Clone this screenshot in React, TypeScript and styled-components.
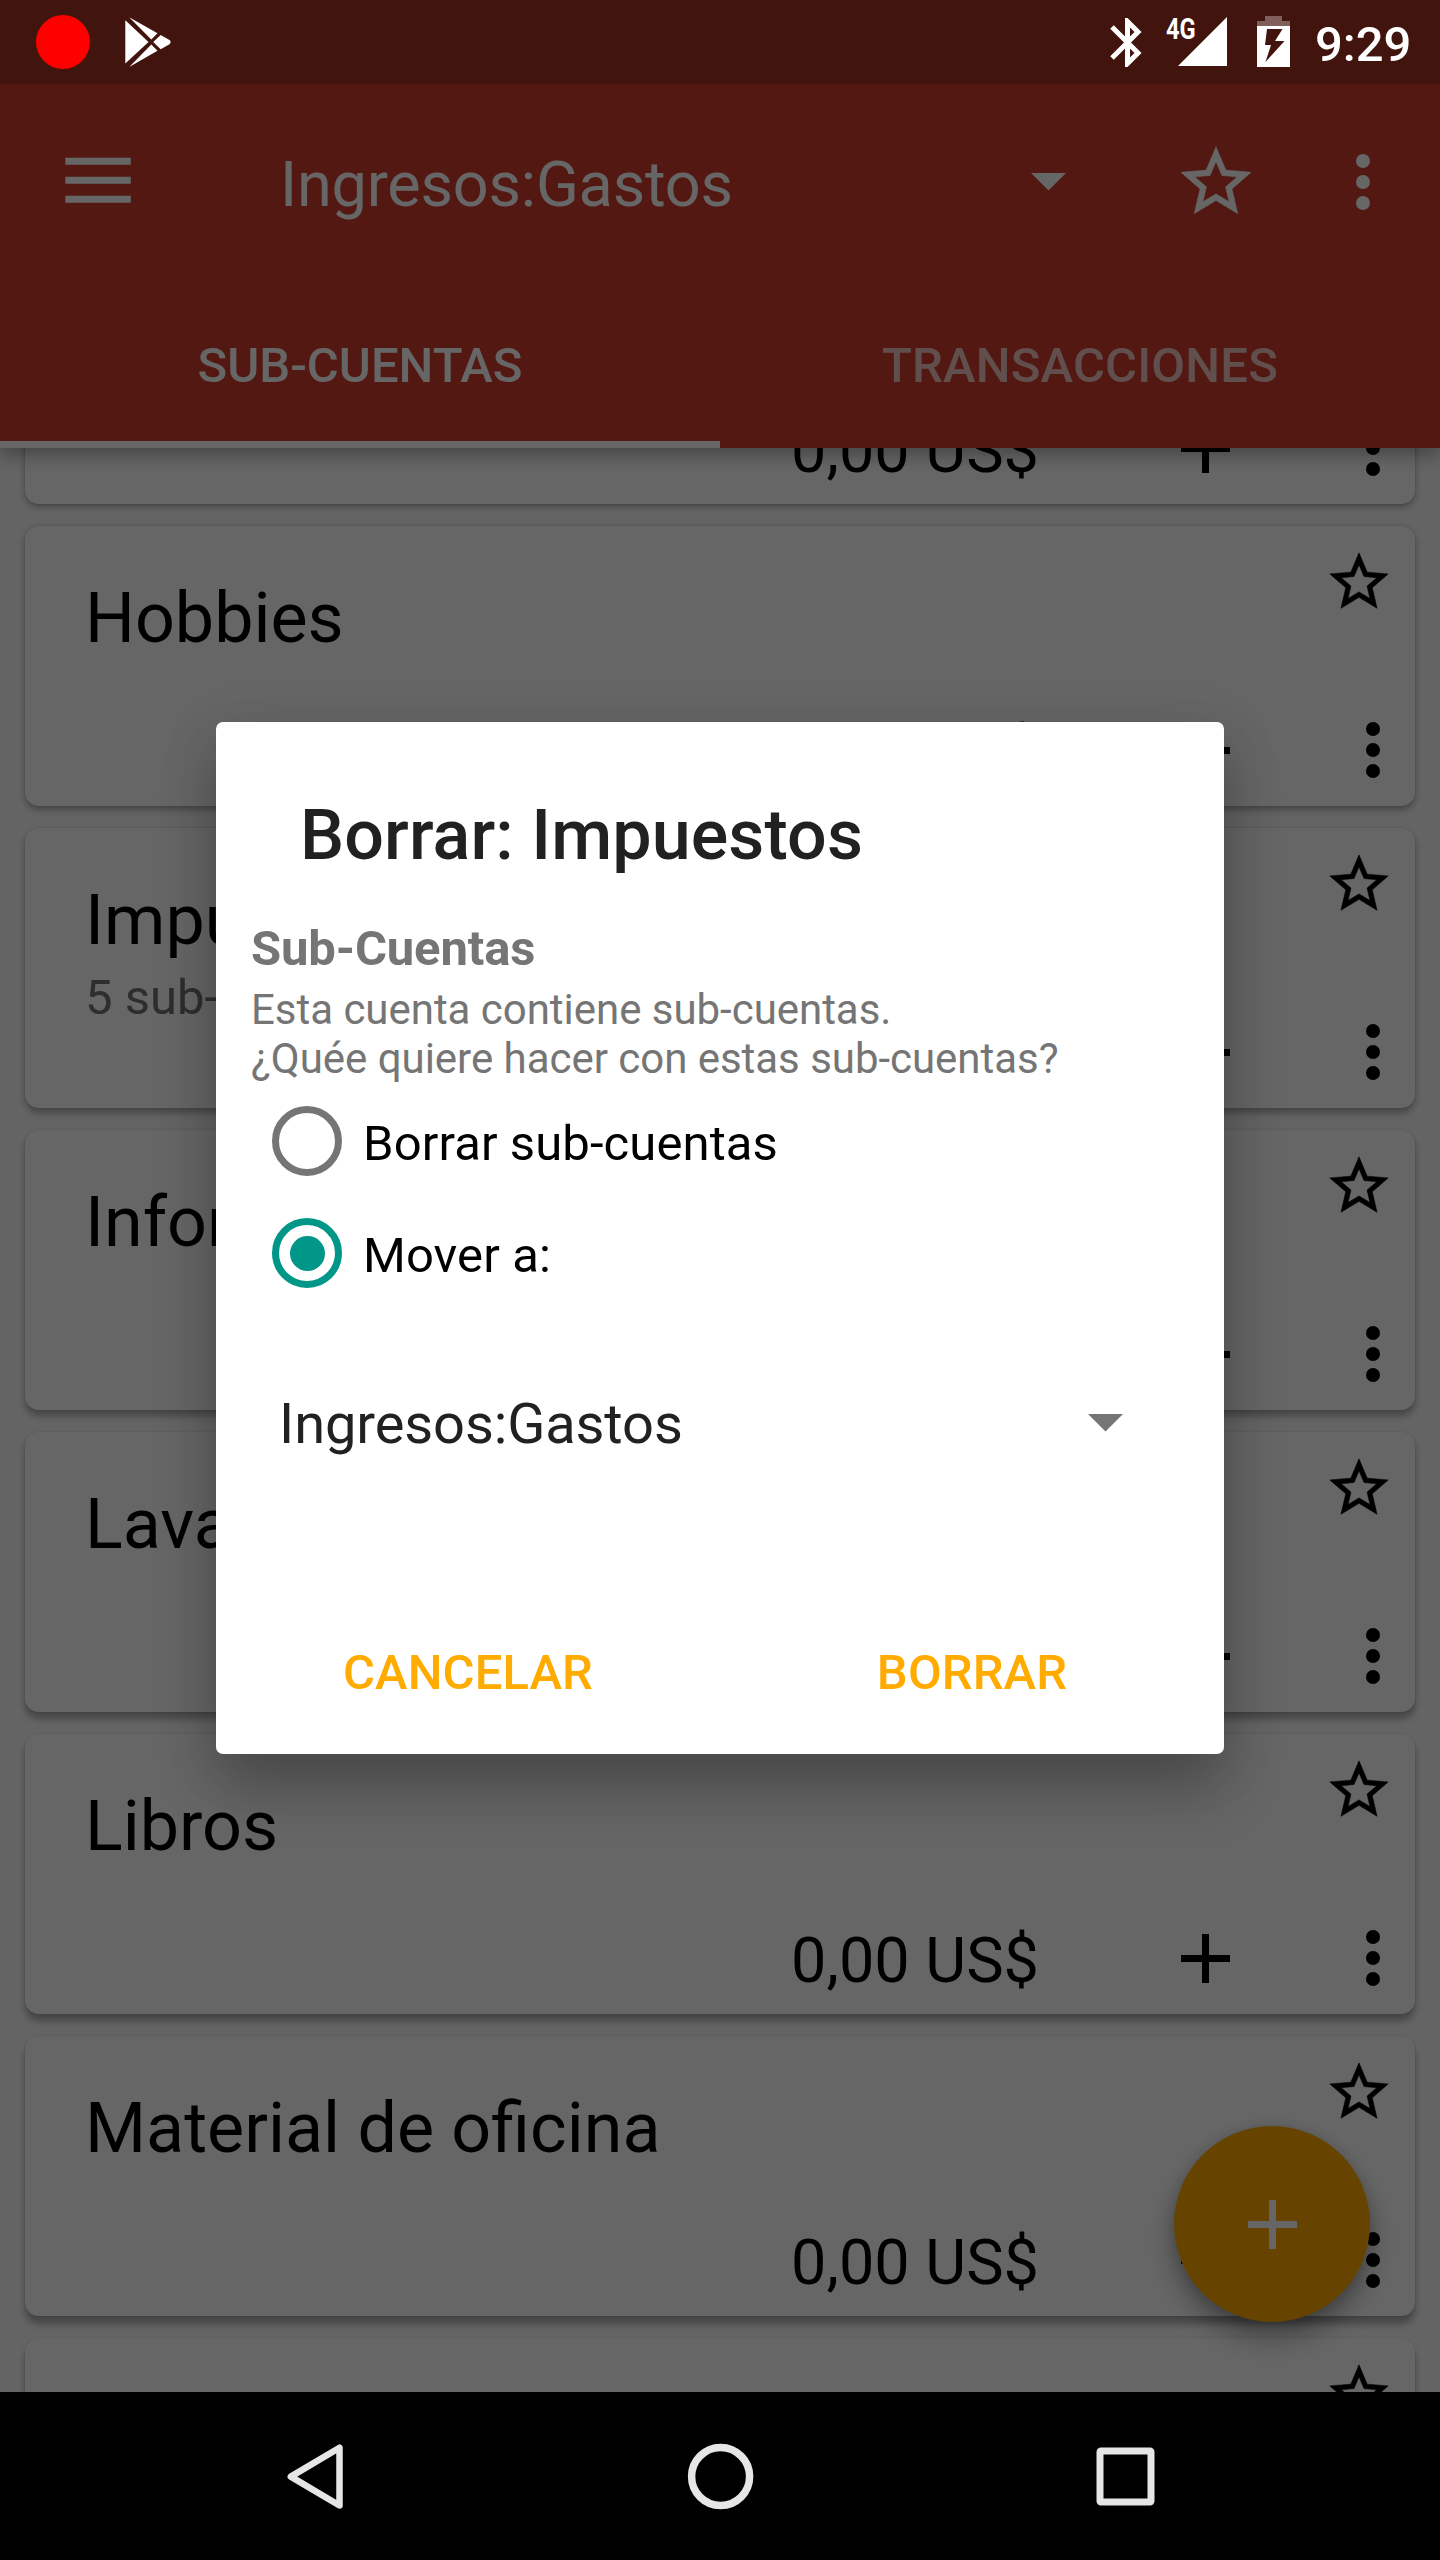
import React from "react";
import styled, { createGlobalStyle } from "styled-components";

const GlobalStyle = createGlobalStyle`
  *, *::before, *::after { box-sizing: border-box; }
  body { margin: 0; background: #000; font-family: Roboto, "Noto Sans", sans-serif; }
  svg { display: block; flex: none; }
`;

const Screen = styled.div`
  position: relative;
  width: 1440px;
  height: 2560px;
  overflow: hidden;
  display: flex;
  flex-direction: column;
  background: #fafafa;
`;

const StatusBar = styled.header`
  position: relative;
  z-index: 3;
  height: 84px;
  flex: none;
  display: flex;
  align-items: flex-start;
  justify-content: space-between;
  background: #42140e;
  color: #fff;
`;

const StatusGroup = styled.div`
  display: flex;
  height: 84px;
`;

const RecordDot = styled.span`
  width: 54px;
  height: 54px;
  margin: 15px 35px 0 36px;
  border-radius: 50%;
  background: #f00;
`;

const BluetoothIcon = styled.svg`
  margin-top: 18px;
`;

const BatteryIcon = styled.svg`
  margin-left: 28px;
`;

const Network = styled.span`
  width: 12px;
  margin: 14px 0 0 24px;
  font-size: 30px;
  line-height: 30px;
  font-weight: 700;
  white-space: nowrap;
`;

const Squeezed = styled.span`
  display: inline-block;
  transform: scaleX(0.79);
  transform-origin: left center;
`;

const Clock = styled.time`
  width: 125px;
  margin-left: 25px;
  font-size: 49px;
  line-height: 89px;
  font-weight: 500;
`;

const AppBar = styled.div`
  position: relative;
  z-index: 1;
  height: 364px;
  flex: none;
  display: flex;
  flex-direction: column;
  background: #cf3e2f;
  color: #fff;
  box-shadow: 0 8px 16px rgba(0, 0, 0, 0.3);
`;

const Toolbar = styled.div`
  height: 196px;
  display: flex;
  align-items: center;
  padding: 0 35px 0 56px;
`;

const ToolbarTitle = styled.h1`
  flex: 1;
  margin: 0;
  padding: 5px 0 0 140px;
  font-size: 63px;
  line-height: 74px;
  font-weight: 400;
  letter-spacing: -0.2px;
`;

const StarSlot = styled.div`
  margin: 0 63px 0 108px;
`;

const Tabs = styled.nav`
  height: 168px;
  display: grid;
  grid-template-columns: 1fr 1fr;
`;

const Tab = styled.div<{ $active?: boolean }>`
  text-align: center;
  font-size: 49px;
  line-height: 172px;
  font-weight: 500;
  letter-spacing: ${(p) => (p.$active ? "0" : "0.2px")};
  height: 168px;
  color: ${(p) => (p.$active ? "#fff" : "rgba(255, 255, 255, 0.7)")};
  border-bottom: 7px solid ${(p) => (p.$active ? "#fff" : "transparent")};
`;

const ListViewport = styled.main`
  height: 1944px;
  flex: none;
  overflow: hidden;
`;

const List = styled.div`
  margin-top: -224px;
  padding: 0 25px;
  display: flex;
  flex-direction: column;
  gap: 22px;
`;

const Card = styled.section<{ $depth: number }>`
  height: 280px;
  flex: none;
  display: flex;
  flex-direction: column;
  justify-content: space-between;
  border-radius: 14px;
  background: #fff;
  box-shadow:
    0 ${(p) => 3 + p.$depth * 0.8}px 7px rgba(0, 0, 0, 0.3),
    0 0 3px rgba(0, 0, 0, 0.12);
`;

const CardHead = styled.div`
  display: flex;
  justify-content: space-between;
  padding: 21px 21px 0 60px;
`;

const CardSpacer = styled.span`
  flex: 1;
`;

const CardTitle = styled.h2`
  margin: 29px 0 0;
  font-size: 70px;
  line-height: 84px;
  font-weight: 400;
  color: #000;
`;

const CardNote = styled.p`
  margin: 7px 0 0;
  font-size: 49px;
  line-height: 57px;
  height: 0;
  color: #737373;
`;

const CardActions = styled.div`
  height: 84px;
  margin-bottom: 14px;
  display: flex;
  align-items: center;
  justify-content: flex-end;
`;

const Amount = styled.span`
  padding-top: 5px;
  margin-right: 124px;
  font-size: 63px;
  line-height: 74px;
  color: #000;
`;

const ActionBox = styled.div`
  width: 84px;
  height: 84px;
  display: flex;
  align-items: center;
  justify-content: center;
  & + & { margin-left: 84px; }
`;

const Fab = styled.button`
  position: absolute;
  z-index: 1;
  left: 1174px;
  top: 2126px;
  width: 196px;
  height: 196px;
  padding: 0;
  border: 0;
  border-radius: 50%;
  display: flex;
  align-items: center;
  justify-content: center;
  background: #ffaa00;
  color: #fff;
  box-shadow: 0 16px 28px rgba(0, 0, 0, 0.32), 0 2px 14px rgba(0, 0, 0, 0.14);
`;

const Scrim = styled.div`
  position: absolute;
  z-index: 2;
  inset: 84px 0 168px 0;
  background: rgba(0, 0, 0, 0.6);
`;

const Dialog = styled.div`
  position: absolute;
  z-index: 4;
  left: 216px;
  top: 722px;
  width: 1008px;
  height: 1032px;
  display: flex;
  flex-direction: column;
  border-radius: 7px;
  background: #fff;
  box-shadow: 0 36px 60px rgba(0, 0, 0, 0.24), 0 10px 60px rgba(0, 0, 0, 0.1);
`;

const DialogTitle = styled.h2`
  margin: 71px 0 0 84px;
  font-size: 70px;
  line-height: 84px;
  font-weight: 500;
  letter-spacing: 0.1px;
  color: #212121;
`;

const DialogBody = styled.div`
  margin-top: 43px;
  padding: 0 35px;
  color: #757575;
`;

const SectionTitle = styled.h3`
  margin: 0;
  font-size: 49px;
  line-height: 57px;
  font-weight: 700;
  letter-spacing: -0.15px;
`;

const Message = styled.p`
  margin: 8px 0 0;
  font-size: 42px;
  line-height: 49px;
  letter-spacing: -0.03px;
`;

const Options = styled.div`
  margin-top: 2px;
`;

const Option = styled.label`
  height: 112px;
  display: flex;
  align-items: center;
  padding-left: 21px;
  font-size: 49px;
  line-height: 57px;
  letter-spacing: 0.1px;
  color: #000;
  span { padding: 4px 0 0 21px; }
`;

const Radio = styled.i<{ $on?: boolean }>`
  width: 70px;
  height: 70px;
  border-radius: 50%;
  border: 7px solid ${(p) => (p.$on ? "#009688" : "#757575")};
  display: flex;
  align-items: center;
  justify-content: center;
  &::after {
    content: "";
    width: 35px;
    height: 35px;
    border-radius: 50%;
    background: ${(p) => (p.$on ? "#009688" : "transparent")};
  }
`;

const Spinner = styled.div`
  margin-top: 73px;
  padding: 0 66px 0 28px;
  height: 84px;
  display: flex;
  align-items: center;
  justify-content: space-between;
  font-size: 56px;
  letter-spacing: -0.1px;
  color: #212121;
`;

const SpinnerArrow = styled.span`
  color: #757575;
  padding-bottom: 3px;
`;

const DialogButtons = styled.div`
  display: grid;
  grid-template-columns: 1fr 1fr;
  margin-top: 122px;
`;

const DialogButton = styled.button`
  height: 168px;
  padding: 0;
  border: 0;
  background: none;
  font: 500 49px/57px Roboto, sans-serif;
  letter-spacing: 0.1px;
  color: #ffab00;
`;

const NavBar = styled.footer`
  height: 168px;
  flex: none;
  display: flex;
  align-items: center;
  justify-content: center;
  gap: 302px;
  background: #000;
`;

const Star = ({ size }: { size: number }) => (
  <svg
    width={size}
    height={size}
    viewBox="0 0 24 24"
    fill="currentColor"
    stroke="currentColor"
    strokeWidth="0.2"
    strokeLinejoin="round"
  >
    <path d="M22 9.24l-7.19-.62L12 2 9.19 8.63 2 9.24l5.46 4.73L5.82 21 12 17.27 18.18 21l-1.63-7.03L22 9.24zM12 15.4l-3.76 2.27 1-4.28-3.32-2.88 4.38-.38L12 6.1l1.71 4.04 4.38.38-3.32 2.88 1 4.28L12 15.4z" />
  </svg>
);

const Dots = () => (
  <svg width="14" height="56" viewBox="0 0 14 56" fill="currentColor">
    <circle cx="7" cy="7" r="7" />
    <circle cx="7" cy="28" r="7" />
    <circle cx="7" cy="49" r="7" />
  </svg>
);

const Plus = () => (
  <svg width="49" height="49" viewBox="0 0 49 49" fill="currentColor">
    <path d="M21 0h7v21h21v7H28v21h-7V28H0v-7h21z" />
  </svg>
);

const Arrow = () => (
  <svg width="35" height="18" viewBox="0 0 35 18" fill="currentColor">
    <path d="M0 0h35L17.5 17.5z" />
  </svg>
);

interface Account {
  name?: string;
  note?: string;
  amount?: string;
}

const accounts: Account[] = [
  { amount: "0,00 US$" },
  { name: "Hobbies", amount: "0,00 US$" },
  { name: "Impuestos", note: "5 sub-cuentas" },
  { name: "Informática" },
  { name: "Lavandería" },
  { name: "Libros", amount: "0,00 US$" },
  { name: "Material de oficina", amount: "0,00 US$" },
  {},
];

export default function App() {
  return (
    <>
      <GlobalStyle />
      <Screen>
        <StatusBar>
          <StatusGroup>
            <RecordDot />
            <svg width="48" height="84" viewBox="0 0 48 84" fill="#fff">
              <path d="M.3 20.2 23.5 42 .3 63.5zM4.2 17.2 32.5 33.3 26.3 39.6zM35.7 35 44.5 40q2.3 2 0 4.2L35.7 49.2 28.2 42zM26.3 44.6 32.5 50.8 4.2 67z" />
            </svg>
          </StatusGroup>
          <StatusGroup>
            <BluetoothIcon width="32" height="49" viewBox="0 18 32 49" fill="none" stroke="#fff" strokeWidth="5">
              <path d="M2 27 28 53 17.5 63.5V21.500L28 32 2 58" />
            </BluetoothIcon>
            <Network><Squeezed>4G</Squeezed></Network>
            <svg width="50" height="84" viewBox="0 0 50 84" fill="#fff">
              <path d="M0 66 49 17v49z" />
            </svg>
            <BatteryIcon width="34" height="84" viewBox="0 0 34 84">
              <path d="M1 26v-5h8v-5h17v5h8v5z" fill="#805e5a" />
              <path fill="#fff" fillRule="evenodd" d="M1 26h33v41H1zM11 29 9 45h6L9.500 62 28.500 41H19l7.500-12z" />
            </BatteryIcon>
            <Clock>9:29</Clock>
          </StatusGroup>
        </StatusBar>

        <AppBar>
          <Toolbar>
            <svg width="84" height="84" viewBox="0 0 84 84" fill="currentColor">
              <path d="M9.300 17.700h65.500v7H9.300zM9.300 36.700h65.500v7H9.300zM9.300 55.700h65.500v7H9.300z" />
            </svg>
            <ToolbarTitle>Ingresos:Gastos</ToolbarTitle>
            <Arrow />
            <StarSlot><Star size={84} /></StarSlot>
            <ActionBox><Dots /></ActionBox>
          </Toolbar>
          <Tabs>
            <Tab $active>SUB-CUENTAS</Tab>
            <Tab>TRANSACCIONES</Tab>
          </Tabs>
        </AppBar>

        <ListViewport>
          <List>
            {accounts.map((a, i) => (
              <Card key={i} $depth={i}>
                <CardHead>
                  <div>
                    {a.name && <CardTitle>{a.name}</CardTitle>}
                    {a.note && <CardNote>{a.note}</CardNote>}
                  </div>
                  <CardSpacer />
                  <Star size={70} />
                </CardHead>
                <CardActions>
                  {a.amount && <Amount>{a.amount}</Amount>}
                  <ActionBox><Plus /></ActionBox>
                  <ActionBox><Dots /></ActionBox>
                </CardActions>
              </Card>
            ))}
          </List>
        </ListViewport>

        <NavBar>
          <svg width="118" height="84" viewBox="0 0 118 84" fill="none" stroke="#e6e6e6" strokeWidth="6.5" strokeLinejoin="round">
            <path d="M81.500 13.700v57.800L32.800 42.600z" />
          </svg>
          <svg width="84" height="84" viewBox="0 0 84 84" fill="none" stroke="#e6e6e6" strokeWidth="7.5">
            <circle cx="42.600" cy="42.500" r="29" />
          </svg>
          <svg width="118" height="84" viewBox="0 0 118 84" fill="none" stroke="#e6e6e6" strokeWidth="7">
            <rect x="36" y="17" width="51" height="51" rx="1" />
          </svg>
        </NavBar>

        <Fab><Plus /></Fab>
        <Scrim />

        <Dialog>
          <DialogTitle>Borrar: Impuestos</DialogTitle>
          <DialogBody>
            <SectionTitle>Sub-Cuentas</SectionTitle>
            <Message>
              Esta cuenta contiene sub-cuentas.
              <br />
              ¿Quée quiere hacer con estas sub-cuentas?
            </Message>
            <Options>
              <Option><Radio /><span>Borrar sub-cuentas</span></Option>
              <Option><Radio $on /><span>Mover a:</span></Option>
            </Options>
            <Spinner>
              Ingresos:Gastos
              <SpinnerArrow><Arrow /></SpinnerArrow>
            </Spinner>
          </DialogBody>
          <DialogButtons>
            <DialogButton>CANCELAR</DialogButton>
            <DialogButton>BORRAR</DialogButton>
          </DialogButtons>
        </Dialog>
      </Screen>
    </>
  );
}
